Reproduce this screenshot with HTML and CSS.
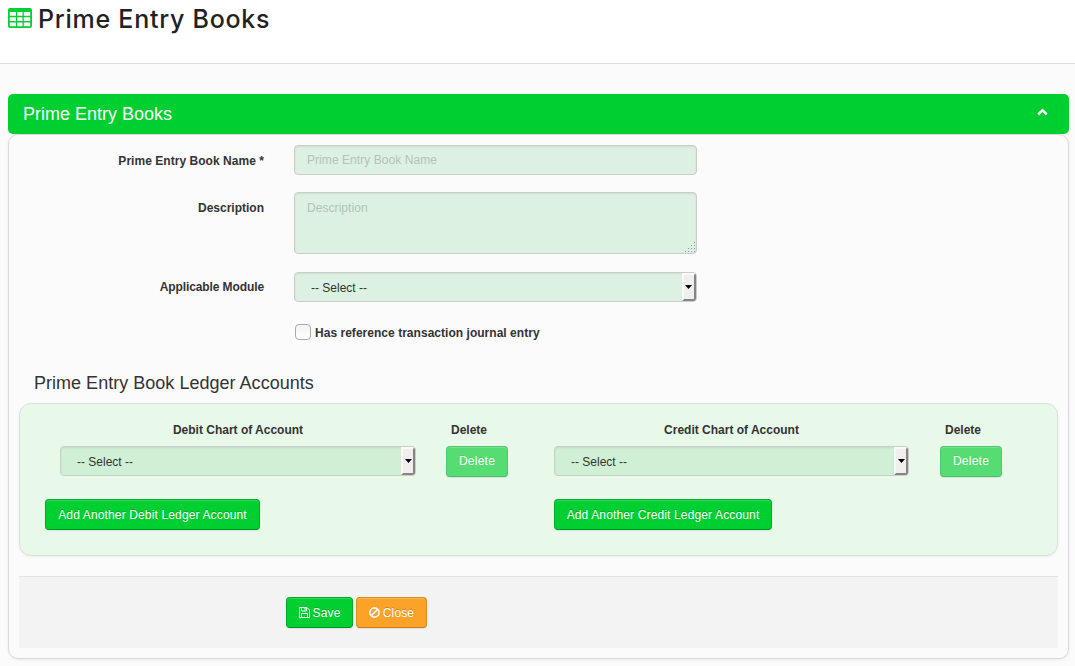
FILE: index.html
```html
<!DOCTYPE html>
<html lang="en">
<head>
<meta charset="utf-8">
<title>Prime Entry Books</title>
<link rel="stylesheet" href="styles.css">
</head>
<body>
<header class="page-header">
  <svg class="table-icon" width="24" height="20" viewBox="0 0 24 20"><rect width="24" height="20" rx="2" fill="#00cf32"/><path fill="#fff" d="M1.700 4H8v3.800H1.700zM9.300 4h5.200v3.800H9.300zM15.800 4h6.400v3.800h-6.400zM1.700 9.200H8V13H1.700zM9.300 9.200h5.200V13H9.300zM15.800 9.200h6.400V13h-6.400zM1.700 14.400H8v3.900H1.700zM9.300 14.400h5.200v3.900H9.300zM15.800 14.400h6.400v3.900h-6.400z"/></svg>
  <h1 class="page-title">Prime Entry Books</h1>
</header>
<main class="content">
  <div class="panel-bar">
    <h2 class="panel-title">Prime Entry Books</h2>
    <svg class="chevron" width="11" height="8" viewBox="0 0 11 8"><path d="M1.200 6.500 5.500 2.200 9.800 6.500" fill="none" stroke="#fff" stroke-width="2.500"/></svg>
  </div>
  <form class="panel">
    <div class="row row-name">
      <label class="label label-name" for="name">Prime Entry Book Name *</label>
      <input class="field" id="name" type="text" placeholder="Prime Entry Book Name">
    </div>
    <div class="row row-description">
      <label class="label" for="description">Description</label>
      <div class="area-wrap">
        <textarea class="field area" id="description" placeholder="Description"></textarea>
        <svg class="grip" width="10" height="10" viewBox="0 0 10 10" fill="#8b9b90"><path d="M9 0h1v1H9zM6 3h1v1H6zM9 3h1v1H9zM3 6h1v1H3zM6 6h1v1H6zM9 6h1v1H9zM0 9h1v1H0zM3 9h1v1H3zM6 9h1v1H6zM9 9h1v1H9z"/></svg>
      </div>
    </div>
    <div class="row row-module">
      <span class="label label-module">Applicable Module</span>
      <div class="field select select-module"><span class="select-text">-- Select --</span><span class="select-button"><svg width="7" height="4" viewBox="0 0 7 4"><path d="M0 0h7L3.500 4z"/></svg></span></div>
    </div>
    <label class="check-row"><input class="check" type="checkbox"><span class="check-text">Has reference transaction journal entry</span></label>
    <h3 class="section-title">Prime Entry Book Ledger Accounts</h3>
    <section class="well">
      <div class="ledger ledger-debit">
        <div class="ledger-row heads"><span class="head-account">Debit Chart of Account</span><span class="head-delete">Delete</span></div>
        <div class="ledger-row"><div class="field select"><span class="select-text">-- Select --</span><span class="select-button"><svg width="7" height="4" viewBox="0 0 7 4"><path d="M0 0h7L3.500 4z"/></svg></span></div><button class="btn delete" type="button" disabled><span>Delete</span></button></div>
        <button class="btn add add-debit" type="button"><span>Add Another Debit Ledger Account</span></button>
      </div>
      <div class="ledger">
        <div class="ledger-row heads"><span class="head-account">Credit Chart of Account</span><span class="head-delete">Delete</span></div>
        <div class="ledger-row"><div class="field select"><span class="select-text">-- Select --</span><span class="select-button"><svg width="7" height="4" viewBox="0 0 7 4"><path d="M0 0h7L3.500 4z"/></svg></span></div><button class="btn delete" type="button" disabled><span>Delete</span></button></div>
        <button class="btn add add-credit" type="button"><span>Add Another Credit Ledger Account</span></button>
      </div>
    </section>
    <footer class="actions">
      <button class="btn save" type="button"><svg width="11" height="11" viewBox="0 0 11 11" fill="none" stroke="#fff"><path d="M.500.500h7.500l2.500 2.500v7.500H.500zM2.500.500v3.500h5V.500M2.500 10.500v-4h6v4M6 1v2"/></svg><span>Save</span></button>
      <button class="btn close" type="button"><svg width="11" height="11" viewBox="0 0 11 11" fill="none" stroke="#fff" stroke-width="1.600"><circle cx="5.500" cy="5.500" r="4.600"/><path d="M2.300 8.700l6.400-6.400"/></svg><span>Close</span></button>
    </footer>
  </form>
</main>
</body>
</html>
```
FILE: styles.css
```css
* { box-sizing: border-box; }
body { margin: 0; height: 666px; overflow: hidden; background: #fbfbfb; color: #333; font: 12px/18px "Liberation Sans", Arial, sans-serif; }
.page-header { display: flex; align-items: flex-start; gap: 6px; height: 64px; padding: 8px 8px 0; background: #fff; border-bottom: 1px solid #ddd; }
.table-icon { flex: none; }
.page-title { margin: -4px 0 0; font: 500 25px/30px Inter, sans-serif; letter-spacing: .74px; color: #222; white-space: nowrap; }
.content { padding: 30px 6px 0 8px; }
.panel-bar { display: flex; justify-content: space-between; align-items: center; height: 40px; padding: 0 21px 0 15px; border-radius: 5px; background: #00cf32; }
.panel-title { margin: 0; color: #fff; font-size: 18px; line-height: 20px; font-weight: 400; }
.chevron { margin-top: -4px; }
.panel { height: 525px; padding: 10px; border: 1px solid #dadada; border-radius: 10px; box-shadow: 0 1px 3px rgba(0,0,0,.07); }
.row { display: grid; grid-template-columns: 245px 403px; column-gap: 30px; }
.row-name { height: 47px; }
.row-description { height: 80px; }
.row-module { height: 52px; }
.label { padding-top: 7px; text-align: right; font-weight: 700; white-space: nowrap; }
.label-name { letter-spacing: .04px; }
.label-module { padding-top: 6px; letter-spacing: -.1px; }
.field { display: block; width: 100%; height: 30px; margin: 0; padding: 4px 12px 5px; border: 1px solid #ccc; border-radius: 4px; background: #dcf1e2; color: #333; font: inherit; box-shadow: inset 0 1px 2px rgba(0,0,0,.08); }
.field::placeholder { color: #b4c2b8; opacity: 1; letter-spacing: .06px; }
.area-wrap { position: relative; height: 62px; }
.area { height: 62px; padding-top: 6px; resize: none; }
.grip { position: absolute; right: 2px; bottom: 2px; }
.select { display: flex; justify-content: space-between; padding: 0 0 0 16px; }
.select-text { padding-top: 6px; }
.select-button { display: flex; align-items: center; justify-content: center; width: 14px; height: 28px; border: solid; border-width: 2px; border-color: #faf9f8 #858585 #858585 #faf9f8; border-radius: 0 3px 3px 0; background: #f0efed; }
.select-module .select-button svg { margin-right: 2px; }
.check-row { display: flex; align-items: center; height: 16px; margin-left: 276px; gap: 4px; font-weight: 700; }
.check { appearance: none; width: 16px; height: 16px; margin: 0; border: 1px solid #a9a9a9; border-radius: 4px; background: linear-gradient(#f3f3f3, #fff); }
.check-text { padding-top: 2px; letter-spacing: .03px; }
.section-title { margin: 33px 0 9px 15px; font-size: 18px; line-height: 21px; font-weight: 400; letter-spacing: .02px; }
.well { display: grid; grid-template-columns: 463px 448px; column-gap: 31px; height: 153px; padding: 17px 0 0 40px; border: 1px solid #d8e2d9; border-radius: 12px; background: #e8f9ea; box-shadow: 0 1px 3px rgba(0,0,0,.05); }
.ledger .field { background: #d0f0d6; }
.ledger-row { display: grid; grid-template-columns: 355px 62px; column-gap: 31px; }
.ledger-debit .ledger-row { grid-template-columns: 356px 62px; column-gap: 30px; }
.heads { height: 25px; font-weight: 700; text-align: center; }
.head-delete { text-align: left; padding-left: 5px; }
.btn { display: flex; align-items: center; justify-content: center; gap: 3px; height: 31px; padding: 0; border: 1px solid #00aa2b; border-bottom-color: #009325; border-radius: 4px; background: #00cf32; color: #fff; font: inherit; letter-spacing: .14px; text-shadow: 0 -1px rgba(0,0,0,.2); white-space: nowrap; box-shadow: inset 0 1px rgba(255,255,255,.2), 0 1px 1px rgba(0,0,0,.08); }
.delete { width: 62px; padding-bottom: 1px; letter-spacing: .25px; background: #55dd74; border-color: #51c66b; border-bottom-color: #4dbb65; text-shadow: 0 -1px rgba(0,0,0,.08); }
.add { margin-top: 22px; }
.add-debit { width: 215px; margin-left: -15px; }
.add-credit { width: 218px; }
.actions { display: flex; gap: 3px; height: 72px; margin-top: 20px; padding: 20px 0 0 267px; border-top: 1px solid #e3e3e3; background: #f3f3f3; }
.save { width: 67px; }
.close { width: 71px; background: #faa328; border-color: #dc8d1c; border-bottom-color: #c87e17; }
```
